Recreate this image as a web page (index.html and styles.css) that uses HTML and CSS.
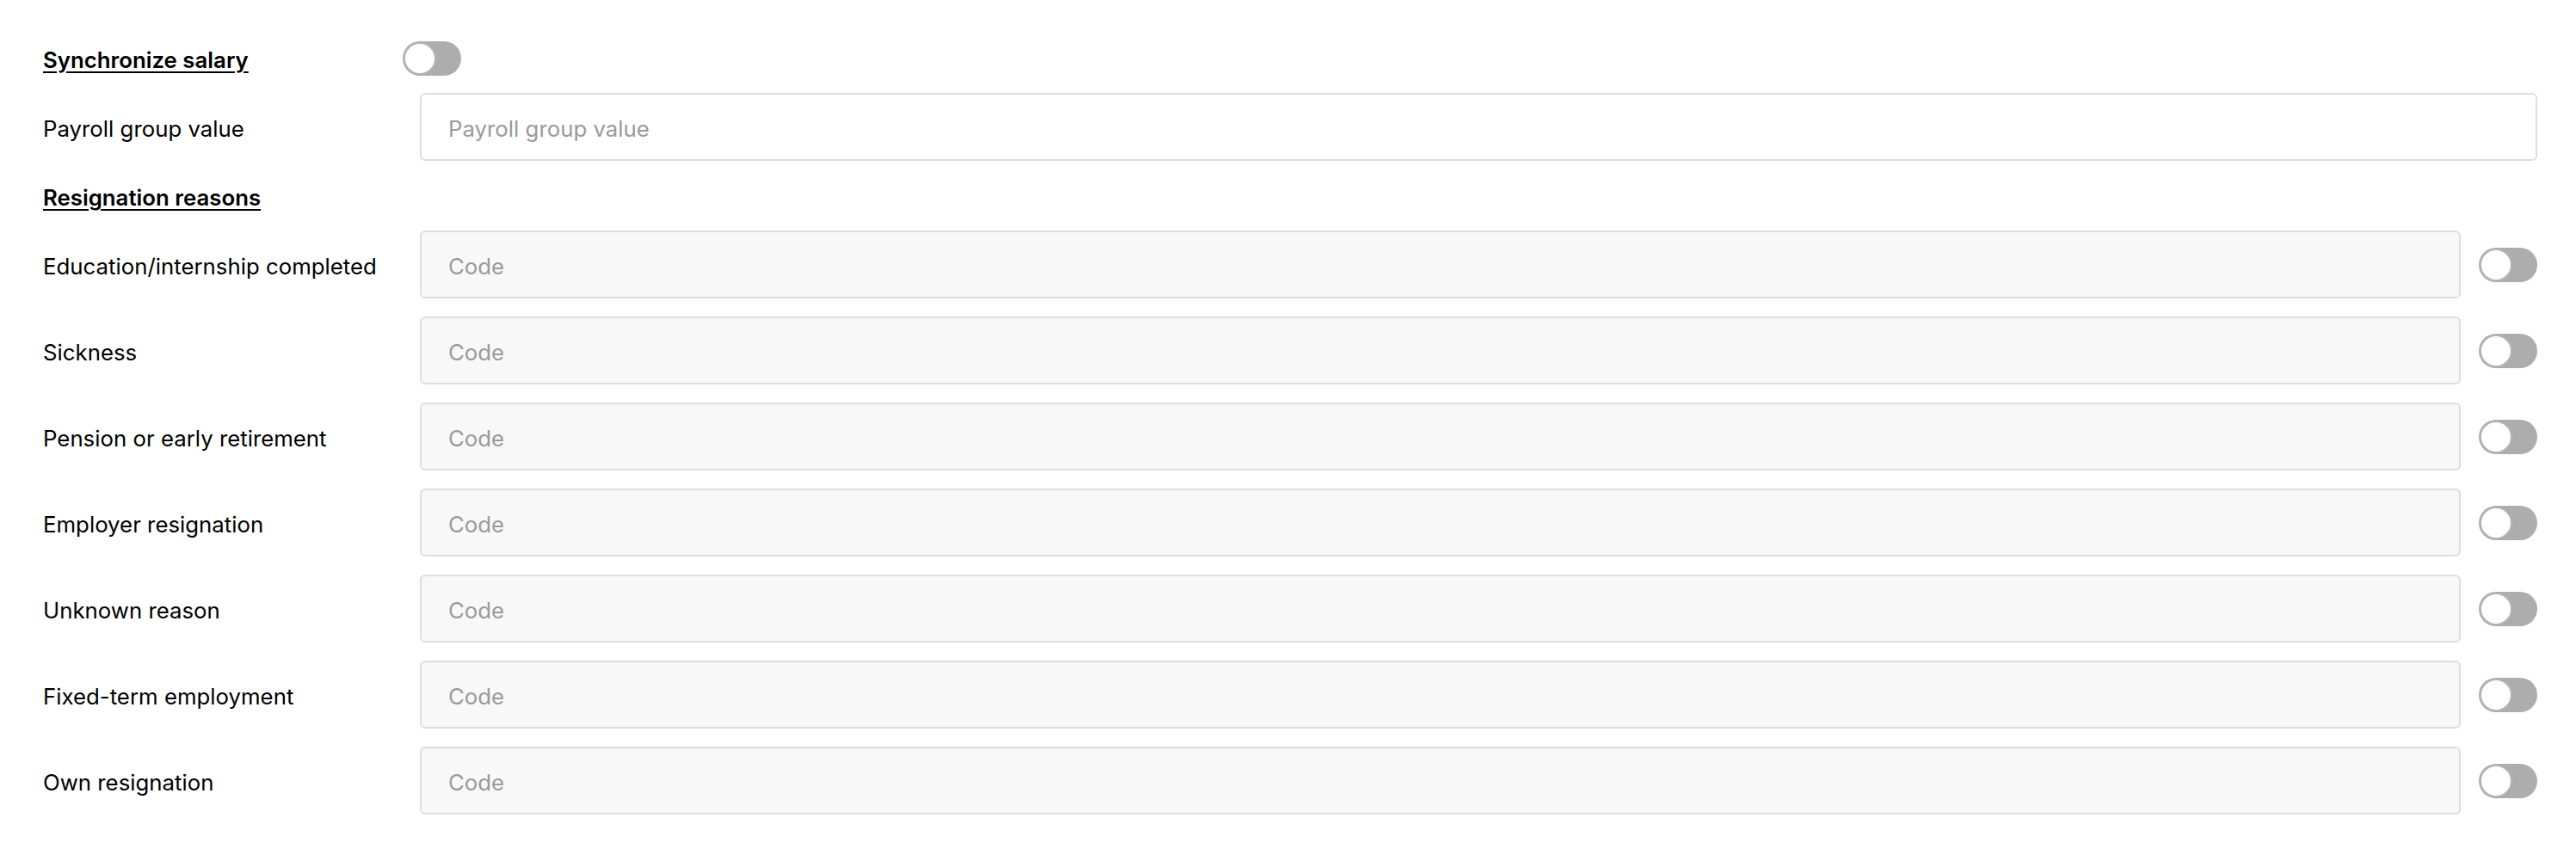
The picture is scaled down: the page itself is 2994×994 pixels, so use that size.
FILE: index.html
```html
<!DOCTYPE html>
<html lang="en">
<head>
<meta charset="utf-8">
<title>Payroll settings</title>
<link rel="stylesheet" href="styles.css">
</head>
<body>
<div class="form">
  <div class="row row-sync">
    <span class="label heading">Synchronize salary</span>
    <span class="toggle"><span class="knob"></span></span>
  </div>
  <div class="row row-field">
    <label class="label">Payroll group value</label>
    <input class="field field-white" type="text" placeholder="Payroll group value">
  </div>
  <div class="row row-head">
    <span class="label heading">Resignation reasons</span>
  </div>
  <div class="row row-field">
    <label class="label">Education/internship completed</label>
    <input class="field" type="text" placeholder="Code">
    <span class="toggle"><span class="knob"></span></span>
  </div>
  <div class="row row-field">
    <label class="label">Sickness</label>
    <input class="field" type="text" placeholder="Code">
    <span class="toggle"><span class="knob"></span></span>
  </div>
  <div class="row row-field">
    <label class="label">Pension or early retirement</label>
    <input class="field" type="text" placeholder="Code">
    <span class="toggle"><span class="knob"></span></span>
  </div>
  <div class="row row-field">
    <label class="label">Employer resignation</label>
    <input class="field" type="text" placeholder="Code">
    <span class="toggle"><span class="knob"></span></span>
  </div>
  <div class="row row-field">
    <label class="label">Unknown reason</label>
    <input class="field" type="text" placeholder="Code">
    <span class="toggle"><span class="knob"></span></span>
  </div>
  <div class="row row-field">
    <label class="label">Fixed-term employment</label>
    <input class="field" type="text" placeholder="Code">
    <span class="toggle"><span class="knob"></span></span>
  </div>
  <div class="row row-field">
    <label class="label">Own resignation</label>
    <input class="field" type="text" placeholder="Code">
    <span class="toggle"><span class="knob"></span></span>
  </div>
</div>
</body>
</html>
```

FILE: styles.css
```css
html, body {
  margin: 0;
  padding: 0;
  background: #ffffff;
}

body {
  font-family: "Inter", "Lato", "Liberation Sans", sans-serif;
  font-size: 25.8px;
  color: #000000;
}

.form {
  display: flex;
  flex-direction: column;
  gap: 21px;
  padding: 48px 45px 0 50px;
}

.row {
  display: flex;
  align-items: center;
}

.row-sync,
.row-head {
  height: 39px;
}

.row-field {
  height: 79px;
}

.label {
  flex: 0 0 438px;
  width: 438px;
  padding-top: 3px;
  box-sizing: border-box;
  white-space: nowrap;
}

.row-sync .label {
  flex-basis: 418px;
  width: 418px;
}

.heading {
  font-weight: 600;
  text-decoration: underline;
  text-decoration-thickness: 2px;
  text-underline-offset: 4px;
}

.field {
  flex: 1 1 auto;
  min-width: 0;
  height: 79px;
  box-sizing: border-box;
  border: 2px solid #dedede;
  border-radius: 6px;
  background: #f8f8f8;
  padding: 3px 31px 0;
  font-family: inherit;
  font-size: 25.8px;
  color: #000000;
  outline: none;
}

.field-white {
  background: #ffffff;
}

.field::placeholder {
  color: #9a9a9a;
  opacity: 1;
}

.toggle {
  position: relative;
  flex: 0 0 68px;
  width: 68px;
  height: 40px;
  border-radius: 20px;
  background: #adadad;
}

.row-field .toggle {
  margin-left: 21px;
}

.knob {
  position: absolute;
  left: 1px;
  top: 1px;
  width: 38px;
  height: 38px;
  box-sizing: border-box;
  border-radius: 50%;
  background: #ffffff;
  border: 2px solid #b4b4b4;
}
```
